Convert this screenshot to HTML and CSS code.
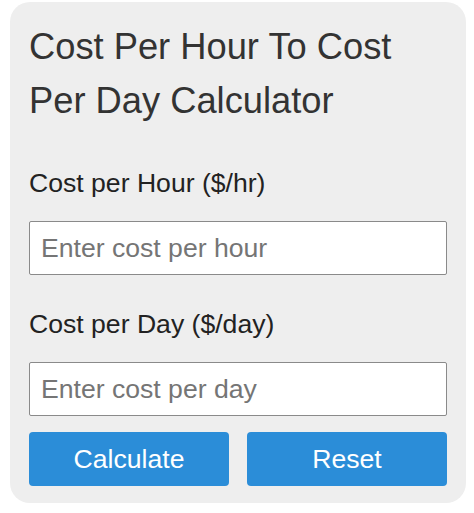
FILE: index.html
```html
<!DOCTYPE html>
<html lang="en">
<head>
<meta charset="utf-8">
<title>Cost Per Hour To Cost Per Day Calculator</title>
<link rel="stylesheet" href="styles.css">
</head>
<body>
<div class="calc">
  <h2 class="calc-title">Cost Per Hour To Cost Per Day Calculator</h2>
  <div class="field field-first">
    <label class="field-label" for="hour">Cost per Hour ($/hr)</label>
    <input class="field-input" id="hour" type="text" placeholder="Enter cost per hour">
  </div>
  <div class="field">
    <label class="field-label" for="day">Cost per Day ($/day)</label>
    <input class="field-input" id="day" type="text" placeholder="Enter cost per day">
  </div>
  <div class="actions">
    <button class="btn" type="button">Calculate</button>
    <button class="btn" type="button">Reset</button>
  </div>
</div>
</body>
</html>
```
FILE: styles.css
```css
html, body {
  margin: 0;
  padding: 0;
  background: #ffffff;
}
body {
  font-family: "Liberation Sans", Arial, sans-serif;
  color: #333333;
}
.calc {
  box-sizing: border-box;
  width: 456px;
  margin: 2px 0 0 10px;
  padding: 18px 19px 17px 19px;
  background: #eeeeee;
  border-radius: 20px;
}
.calc-title {
  margin: 0;
  font-size: 36.3px;
  font-weight: normal;
  line-height: 54px;
  color: #333333;
}
.field {
  display: flex;
  flex-direction: column;
  margin-top: 34px;
}
.field-first {
  margin-top: 40px;
}
.field-label {
  font-size: 26.6px;
  line-height: 30px;
  color: #222222;
  margin-bottom: 23px;
}
.field-input {
  box-sizing: border-box;
  width: 100%;
  height: 54px;
  margin: 0;
  padding: 0 11px;
  border: 1px solid #8a8a8a;
  border-radius: 2px;
  background: #ffffff;
  font-family: "Liberation Sans", Arial, sans-serif;
  font-size: 26.6px;
  color: #333333;
}
.field-input::placeholder {
  color: #757575;
}
.actions {
  display: flex;
  gap: 18px;
  margin-top: 16px;
}
.btn {
  flex: 1;
  height: 54px;
  margin: 0;
  padding: 0;
  border: none;
  border-radius: 4px;
  background: #2b8dd8;
  color: #ffffff;
  font-family: "Liberation Sans", Arial, sans-serif;
  font-size: 26.6px;
}
```
